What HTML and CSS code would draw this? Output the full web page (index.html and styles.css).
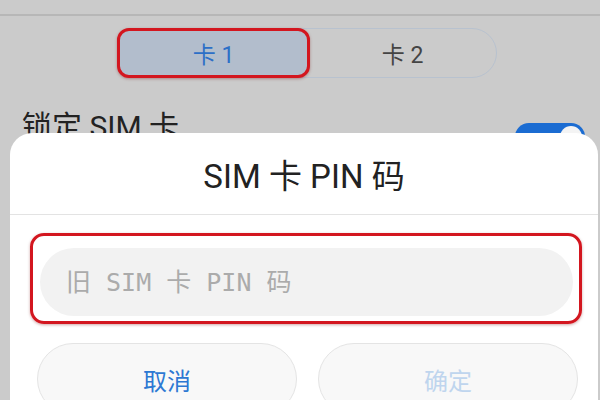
FILE: index.html
```html
<!DOCTYPE html>
<html>
<head>
    <title>SIM 卡锁定</title>
    <link rel="stylesheet" href="styles.css">
</head>
<body>
    <div class="topbar"></div>

    <div class="tabs">
        <div class="seg active">卡 1</div>
        <div class="seg">卡 2</div>
    </div>

    <div class="row">
        <span class="label">锁定 SIM 卡</span>
        <span class="toggle"><span class="knob"></span></span>
    </div>

    <div class="dialog">
        <div class="dialog-title">SIM 卡 PIN 码</div>
        <div class="mark">
            <input type="password" class="pin" placeholder="旧 SIM 卡 PIN 码">
        </div>
        <div class="actions">
            <button class="btn cancel">取消</button>
            <button class="btn ok" disabled>确定</button>
        </div>
    </div>
</body>
</html>
```

FILE: styles.css
```css
body {
    margin: 0;
    width: 600px;
    height: 400px;
    overflow: hidden;
    position: relative;
    background-color: #cbcbcb;
    font-family: Roboto, "Noto Sans CJK SC", sans-serif;
}

.topbar {
    height: 14px;
    border-bottom: 2px solid #b7b7b7;
}

.tabs {
    display: flex;
    width: 380px;
    height: 50px;
    margin: 12px 0 0 117px;
    border: 1px solid #b8c2cf;
    border-radius: 25px;
    box-sizing: border-box;
}

.seg {
    flex: 1;
    display: flex;
    justify-content: center;
    align-items: center;
    font-size: 23px;
    color: #444;
}

.seg.active {
    margin: -1px;
    background-color: #b2bdcc;
    border: 3px solid #d3161f;
    border-radius: 12px;
    color: #2c6fc7;
    box-shadow: 0 1px 3px rgba(120, 0, 0, 0.35);
}

.row {
    display: flex;
    justify-content: space-between;
    align-items: flex-start;
    padding: 30px 15px 0 22px;
}

.label {
    font-size: 30px;
    color: #222;
    line-height: 38px;
}

.toggle {
    position: relative;
    width: 70px;
    height: 28px;
    margin-top: 15px;
    background-color: #1b6cd2;
    border-radius: 14px;
}

.knob {
    position: absolute;
    right: 3px;
    top: 3px;
    width: 22px;
    height: 22px;
    border-radius: 50%;
    background-color: #f4f4f4;
}

.dialog {
    position: absolute;
    left: 10px;
    right: 2px;
    top: 133px;
    bottom: 0;
    overflow: hidden;
    background-color: #fff;
    border-radius: 22px 22px 0 0;
}

.dialog-title {
    height: 81px;
    display: flex;
    justify-content: center;
    align-items: center;
    font-size: 33px;
    color: #222;
    border-bottom: 1px solid #e3e3e3;
}

.mark {
    margin: 18px 16px 0 20px;
    padding: 12px 6px 5px 7px;
    border: 3px solid #d3161f;
    border-radius: 14px;
    box-shadow: 0 1px 3px rgba(120, 0, 0, 0.35);
}

.pin {
    display: block;
    width: 100%;
    height: 68px;
    box-sizing: border-box;
    padding: 0 0 0 26px;
    border: none;
    border-radius: 34px;
    background-color: #f2f2f2;
    font-family: "DejaVu Sans Mono", "Noto Sans CJK SC", monospace;
    font-size: 25px;
    outline: none;
}

.pin::placeholder {
    color: #ababab;
}

.actions {
    display: flex;
    gap: 21px;
    margin: 19px 20px 0 27px;
}

.btn {
    flex: 1;
    height: 72px;
    flex-shrink: 0;
    border: 1px solid #e4e4e4;
    border-radius: 36px;
    background-color: #f8f8f8;
    font-family: "Noto Sans CJK SC", sans-serif;
    font-size: 24px;
}

.cancel {
    color: #2d78d3;
}

.ok {
    color: #bfd5ee;
}
```
